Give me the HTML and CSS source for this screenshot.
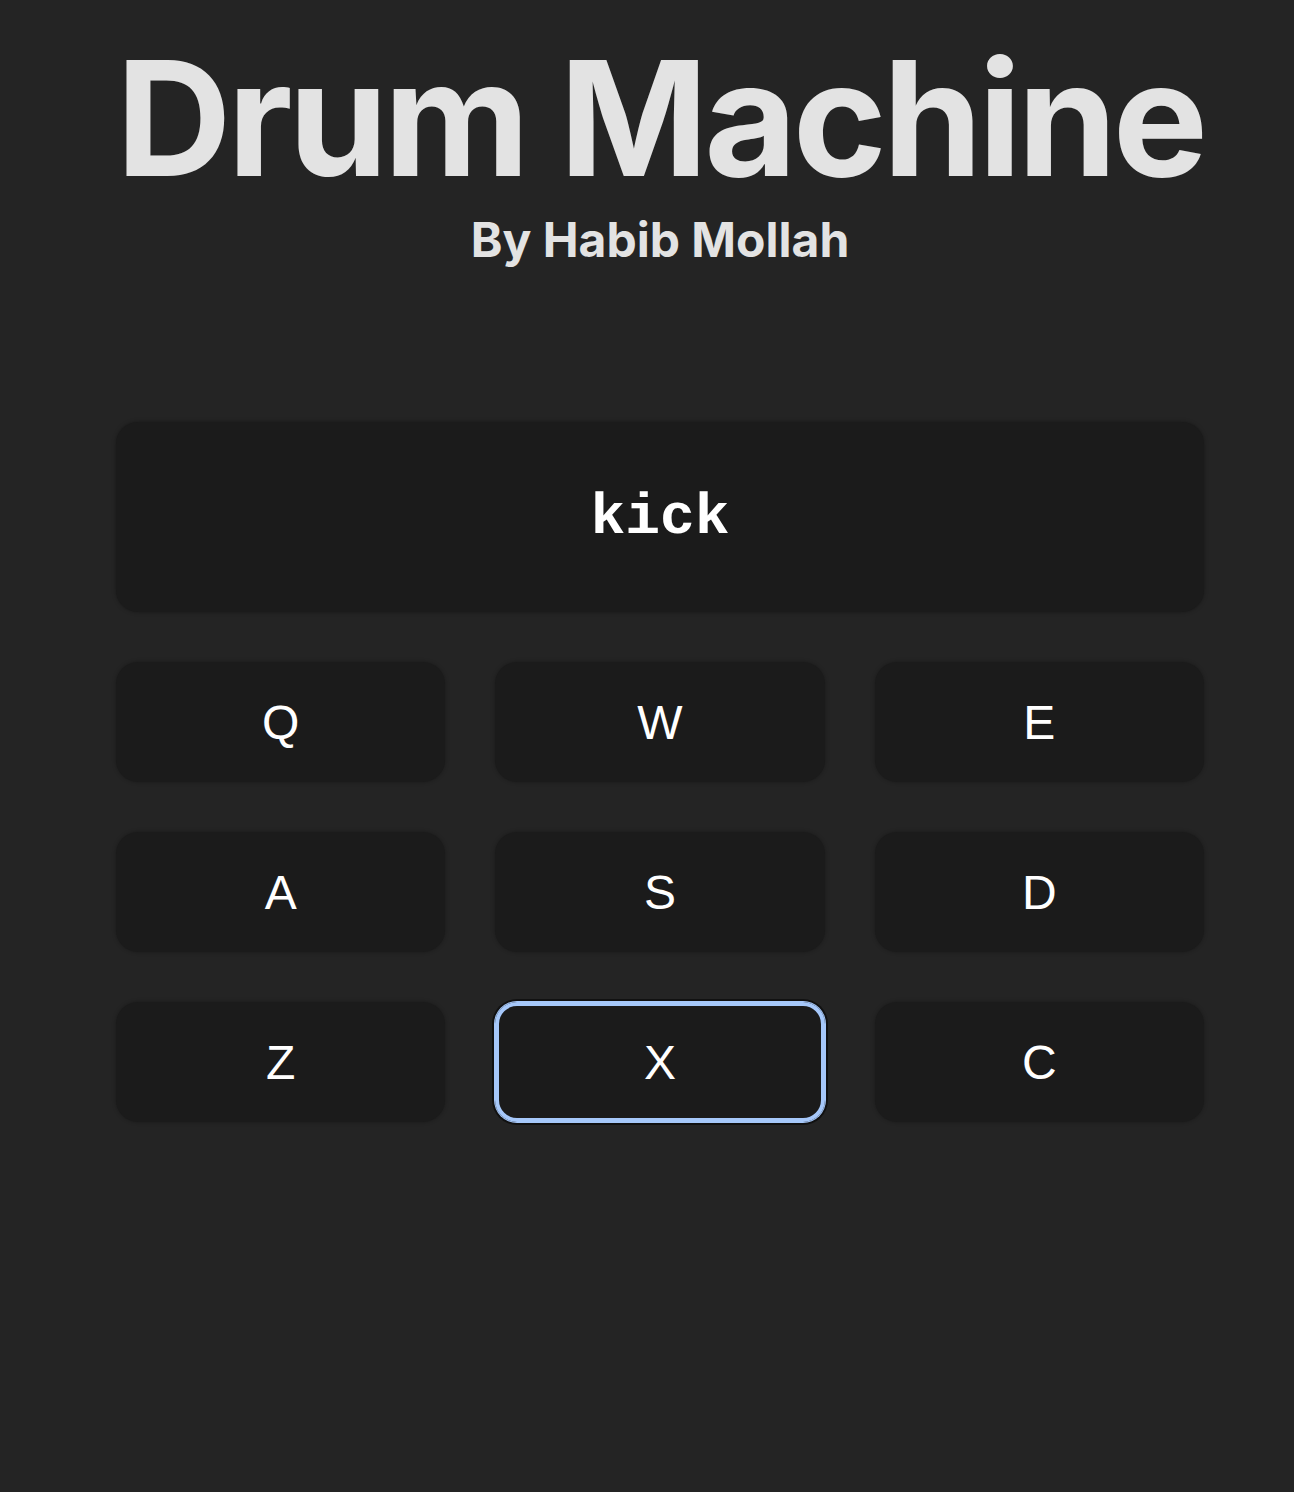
FILE: index.html
```html
<!DOCTYPE html>
<html lang="en">
<head>
<meta charset="utf-8">
<title>Drum Machine</title>
<link rel="stylesheet" href="styles.css">
</head>
<body>
<div class="page">
  <main class="app" id="drum-machine">
    <header class="header">
      <h1 class="title">Drum Machine</h1>
      <p class="subtitle">By Habib Mollah</p>
    </header>
    <div class="display" id="display">kick</div>
    <div class="pads">
      <button class="pad">Q</button>
      <button class="pad">W</button>
      <button class="pad">E</button>
      <button class="pad">A</button>
      <button class="pad">S</button>
      <button class="pad">D</button>
      <button class="pad">Z</button>
      <button class="pad pad--focused">X</button>
      <button class="pad">C</button>
    </div>
  </main>
</div>
</body>
</html>
```
FILE: styles.css
```css
html, body {
  margin: 0;
  padding: 0;
  background: #242424;
}

.page {
  padding-left: 26px;
  min-height: 1492px;
  box-sizing: border-box;
}

.app {
  width: 1088px;
  margin: 0 auto;
}

.header {
  text-align: center;
  color: #e3e3e3;
  font-family: Inter, "Noto Sans", sans-serif;
  white-space: nowrap;
}

.title {
  margin: 38px -40px 0;
  font-size: 160px;
  line-height: 160px;
  font-weight: 700;
  letter-spacing: -4.2px;
}

.subtitle {
  margin: 18px 0 0;
  font-size: 48px;
  line-height: 48px;
  font-weight: 700;
  letter-spacing: 0;
}

.display {
  margin-top: 158px;
  height: 190px;
  border-radius: 22px;
  background: #1b1b1b;
  box-shadow: 0 0 4px rgba(0, 0, 0, 0.35);
  display: flex;
  align-items: center;
  justify-content: center;
  color: #ffffff;
  font-family: "Liberation Mono", "Courier New", monospace;
  font-weight: 700;
  font-size: 58px;
}

.pads {
  margin-top: 50px;
  display: grid;
  grid-template-columns: repeat(3, 1fr);
  grid-auto-rows: 120px;
  gap: 50px;
}

.pad {
  border: none;
  border-radius: 22px;
  background: #1b1b1b;
  box-shadow: 0 0 4px rgba(0, 0, 0, 0.3);
  color: #ffffff;
  font-family: "Liberation Sans", Arial, sans-serif;
  font-size: 48px;
  padding: 0;
  cursor: pointer;
}

.pad--focused {
  box-shadow: inset 0 0 0 4px #a6c8fa, 0 0 0 1px #a6c8fa, 0 0 0 3px #111111;
}
```
